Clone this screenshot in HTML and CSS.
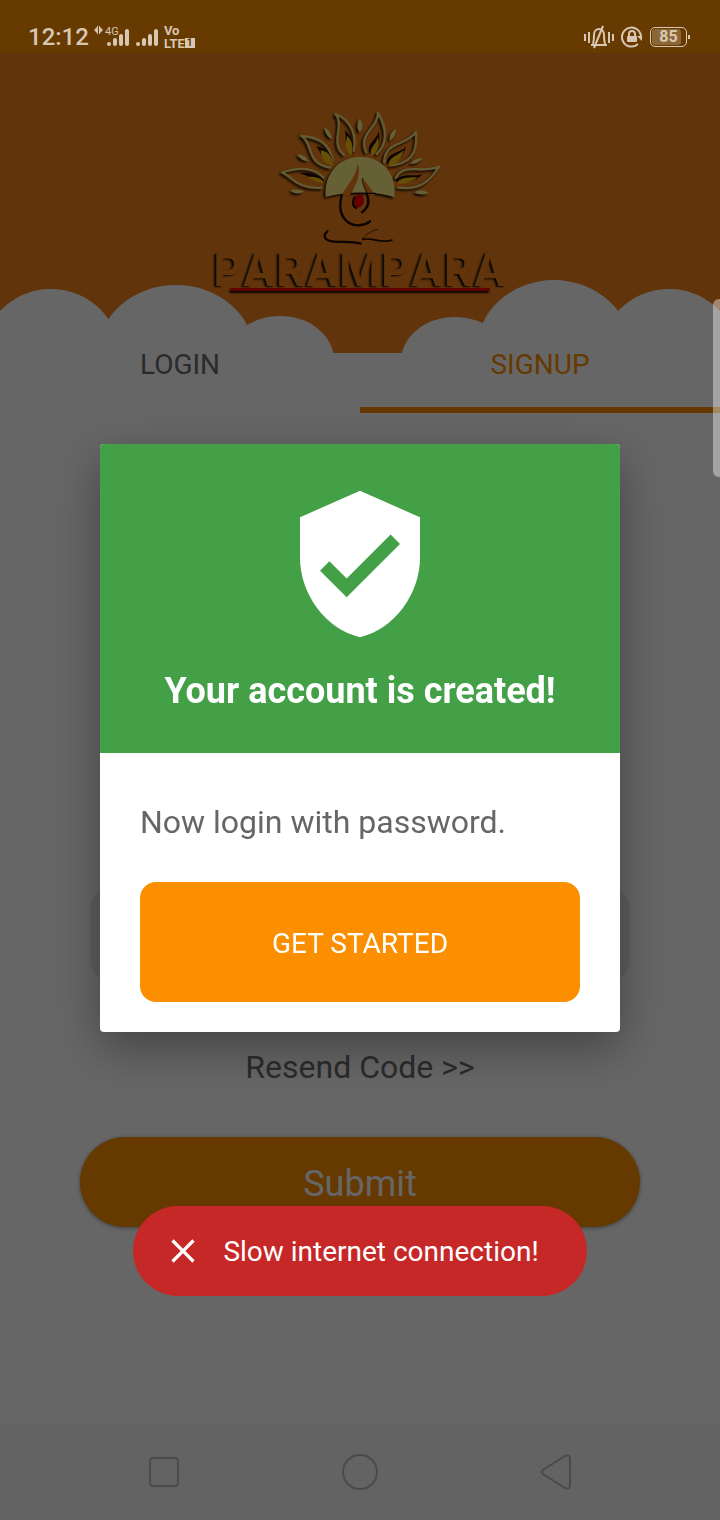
FILE: index.html
```html
<!DOCTYPE html>
<html lang="en">
<head>
<meta charset="utf-8">
<meta name="viewport" content="width=device-width, initial-scale=1">
<title>Parampara</title>
<link rel="stylesheet" href="styles.css">
</head>
<body>
<div class="app">
  <div class="status-bar">
    <div class="status-group">
      <span class="clock">12:12</span>
      <svg class="signal" viewBox="0 0 38 24" width="38" height="24" aria-hidden="true">
        <g fill="currentColor">
          <path d="M0 5l3-3v6zM3 1h1v8H3zM5 1h1v8H5zM9 5L6 2v6z"/>
          <circle cx="15" cy="19" r="2"/>
          <rect x="19" y="13" width="4" height="8" rx="2"/>
          <rect x="25" y="9" width="4" height="12" rx="2"/>
          <rect x="31" y="4" width="4" height="17" rx="2"/>
        </g>
        <text class="signal-text" x="11" y="10">4G</text>
      </svg>
      <svg class="signal" viewBox="0 0 24 24" width="24" height="24" aria-hidden="true">
        <g fill="currentColor">
          <circle cx="2" cy="19" r="2"/>
          <rect x="6" y="13" width="4" height="8" rx="2"/>
          <rect x="12" y="9" width="4" height="12" rx="2"/>
          <rect x="18" y="4" width="4" height="17" rx="2"/>
        </g>
      </svg>
      <span class="volte"><span>Vo</span><span class="lte">LTE<span class="sim">1</span></span></span>
    </div>
    <div class="status-group status-right">
      <svg viewBox="0 0 30 24" width="30" height="24" fill="none" stroke="currentColor" stroke-width="2" aria-hidden="true">
        <path d="M1 9v7M5 7v11M25 7v11M29 9v7M7 20h16M9 19c1-3 1-6 1-9 0-8 10-8 10 0 0 3 0 6 1 9M19 1L10 23"/>
      </svg>
      <svg viewBox="0 0 22 22" width="22" height="22" fill="none" stroke="currentColor" stroke-width="2" aria-hidden="true">
        <path d="M20 11a9.500 9.500 0 1 0-3 7"/>
        <path d="M21 15v-5l-5 0z" fill="currentColor" stroke="none"/>
        <path d="M8 10V8a3 3 0 0 1 6 0v2"/>
        <rect x="6" y="10" width="10" height="6" rx="1" fill="currentColor" stroke="none"/>
      </svg>
      <span class="battery"><span class="battery-level">85</span></span>
    </div>
  </div>

  <header class="hero">
    <svg class="clouds" viewBox="0 0 720 80" preserveAspectRatio="none" aria-hidden="true">
      <g fill="#fff">
        <ellipse cx="51" cy="86" rx="70" ry="70"/>
        <ellipse cx="176" cy="80" rx="78" ry="68"/>
        <ellipse cx="280" cy="87" rx="54" ry="44"/>
        <ellipse cx="455" cy="88" rx="54" ry="44"/>
        <ellipse cx="554" cy="79" rx="78" ry="72"/>
        <ellipse cx="669" cy="86" rx="70" ry="70"/>
      </g>
    </svg>
    <div class="brand">
      <svg class="emblem" viewBox="0 0 600 450" width="200" height="150" role="img" aria-label="Parampara emblem">
        <g class="relief" fill="none" stroke="#f5e27c" stroke-width="7" stroke-linejoin="round">
          <path d="M192 236C168 202 116 200 66 218C100 232 112 268 188 263"/>
          <path d="M218 186C212 132 178 112 124 108C162 130 136 194 214 203"/>
          <path d="M280 156C292 110 276 62 227 42C256 82 206 130 254 166"/>
          <path d="M320 160C290 100 354 88 354 38C388 98 376 138 348 164"/>
          <path d="M372 190C374 122 432 142 468 97C474 166 446 192 388 197"/>
          <path d="M406 236C430 186 484 222 537 200C508 248 474 272 412 262"/>
        </g>
        <g fill="#1c0c00">
          <path d="M192 240C170 220 144 216 118 220C144 226 160 244 190 247Z"/>
          <path d="M219 192C216 158 196 144 168 139C184 154 182 180 218 196Z"/>
          <path d="M275 164C284 132 276 108 254 91C262 118 250 140 270 166Z"/>
          <path d="M328 162C318 128 352 120 356 92C362 122 356 146 336 166Z"/>
          <path d="M380 192C380 156 420 160 438 140C430 170 414 190 386 196Z"/>
          <path d="M406 240C430 216 464 232 488 223C466 246 436 252 410 247Z"/>
        </g>
        <g fill="#ffc30c">
          <path d="M190 243C176 230 160 230 140 230C158 240 168 248 190 248Z"/>
          <path d="M220 194C214 164 202 154 182 151C184 176 192 190 219 198Z"/>
          <path d="M275 165C282 140 274 118 262 108C256 130 252 144 271 167Z"/>
          <path d="M332 165C328 142 350 132 354 110C360 136 352 156 337 167Z"/>
          <path d="M384 197C388 168 414 168 432 150C424 180 408 194 387 199Z"/>
          <path d="M412 246C430 228 454 234 474 231C454 248 432 254 412 250Z"/>
        </g>
        <g class="relief" fill="#fff08a">
          <path d="M90 272Q112 264 132 274Q112 288 90 272Z"/>
          <path d="M111 163Q138 164 146 184Q122 184 111 163Z"/>
          <path d="M193 82Q214 94 216 118Q196 110 193 82Z"/>
          <path d="M299 56Q316 78 299 98Q284 78 299 56Z"/>
          <path d="M408 86Q408 112 388 124Q386 98 408 86Z"/>
          <path d="M488 174Q472 194 450 192Q460 174 488 174Z"/>
          <path d="M462 277Q484 264 506 278Q484 290 462 277Z"/>
          <path d="M197 292C190 218 242 170 300 170C364 170 412 220 403 292C370 280 340 278 308 278C270 278 230 280 197 292Z"/>
        </g>
        <path fill="#f2821e" d="M244 292C258 254 288 236 293 190C304 222 290 250 272 284ZM346 290C336 262 314 250 309 230C304 250 310 264 322 286Z"/>
        <g class="soft" fill="none" stroke="#1c0c00" stroke-linecap="round">
          <path stroke-width="4" d="M274 280H346"/>
          <path stroke-width="7" d="M245 286C236 322 242 352 266 368C284 380 312 378 330 364"/>
          <path stroke-width="7" d="M320 282C330 304 324 324 306 337"/>
          <path stroke-width="7" d="M284 292C276 304 278 318 288 324"/>
          <path stroke-width="2" d="M306 236C308 254 316 266 322 278"/>
          <path stroke-width="7" d="M202 394C188 406 192 420 216 424C246 428 276 422 302 431"/>
          <path stroke-width="5" d="M308 418C338 412 366 432 396 420"/>
          <path stroke-width="2" d="M308 416C322 400 336 392 354 388"/>
        </g>
        <ellipse cx="297" cy="303" rx="14" ry="20" transform="rotate(12 297 303)" fill="#ff0000"/>
      </svg>
      <div class="wordmark">PARAMPARA</div>
      <div class="rule"></div>
    </div>
  </header>

  <nav class="tabs">
    <button class="tab" type="button">LOGIN</button>
    <button class="tab tab-active" type="button">SIGNUP</button>
  </nav>

  <main class="form">
    <input class="code-input" type="text" aria-label="Verification code">
    <a class="resend" href="#">Resend Code &gt;&gt;</a>
    <button class="submit" type="submit">Submit</button>
  </main>

  <div class="nav-bar">
    <button type="button" aria-label="Recent apps">
      <svg viewBox="0 0 40 40" width="40" height="40"><rect x="6" y="6" width="28" height="28" rx="3"/></svg>
    </button>
    <button type="button" aria-label="Home">
      <svg viewBox="0 0 40 40" width="40" height="40"><circle cx="20" cy="20" r="17"/></svg>
    </button>
    <button type="button" aria-label="Back">
      <svg viewBox="0 0 40 40" width="40" height="40"><path d="M7.500 17.500L29 4Q34 2 34 6.500V33Q34 38 29 36L7.500 22.500Q4 20 7.500 17.500Z"/></svg>
    </button>
  </div>
</div>

<div class="scrim">
  <section class="dialog" role="dialog" aria-modal="true" aria-labelledby="dialog-title">
    <div class="dialog-head">
      <svg viewBox="0 0 24 24" width="160" height="160" fill="#fff" aria-hidden="true">
        <path d="M12 1L3 5v6c0 5.550 3.840 10.740 9 12 5.160-1.260 9-6.450 9-12V5l-9-4zm-2 16l-4-4 1.410-1.410L10 14.170l6.590-6.590L18 9l-8 8z"/>
      </svg>
      <h1 id="dialog-title">Your account is created!</h1>
    </div>
    <div class="dialog-body">
      <p>Now login with password.</p>
      <button class="start" type="button">GET STARTED</button>
    </div>
  </section>
</div>

<div class="toast-layer">
  <div class="toast" role="alert">
    <svg viewBox="0 0 24 24" width="40" height="40" fill="#fff" aria-hidden="true">
      <path d="M19 6.410L17.590 5 12 10.590 6.410 5 5 6.410 10.590 12 5 17.590 6.410 19 12 13.410 17.590 19 19 17.590 13.410 12z"/>
    </svg>
    <span>Slow internet connection!</span>
  </div>
</div>
<div class="edge-handle"></div>
</body>
</html>
```

FILE: styles.css
```css
* {
  box-sizing: border-box;
}

body {
  margin: 0;
  font-family: Roboto, "Liberation Sans", sans-serif;
  background: #fff;
}

button {
  border: 0;
  padding: 0;
  background: none;
  font-family: inherit;
}

svg {
  display: block;
}

.app {
  display: flex;
  flex-direction: column;
  min-height: 100vh;
}

/* System bars sit above the scrim */
.status-bar {
  position: relative;
  z-index: 2;
  display: flex;
  justify-content: space-between;
  height: 53px;
  padding: 20px 33px 0 28px;
  background: #663a00;
  color: #d8c7b2;
}

.status-group {
  display: flex;
  align-items: center;
  height: 33px;
}

.clock {
  margin-right: 5px;
  font-size: 24px;
  font-weight: 500;
  line-height: 32px;
}

.signal {
  margin-right: 4px;
}

.signal-text {
  font-size: 11px;
  fill: currentColor;
}

.volte {
  display: flex;
  flex-direction: column;
  font-size: 13px;
  font-weight: 700;
  line-height: 13px;
}

.lte {
  display: flex;
  align-items: center;
}

.sim {
  padding: 0 2px;
  background: #d8c7b2;
  color: #663a00;
  font-size: 10px;
  line-height: 10px;
}

.status-right {
  gap: 7px;
}

.battery {
  position: relative;
  width: 37px;
  height: 20px;
  padding: 1px;
  border: 1px solid #d8c7b2;
  border-radius: 5px;
}

.battery::after {
  content: "";
  position: absolute;
  top: 7px;
  right: -4px;
  width: 2px;
  height: 4px;
  background: #d8c7b2;
}

.battery-level {
  display: block;
  width: 29px;
  padding-left: 4px;
  border-radius: 3px;
  background: #8b6738;
  font-size: 16px;
  font-weight: 700;
  line-height: 16px;
  text-align: center;
}

.hero {
  display: grid;
  height: 300px;
  background: #f2821e;
}

.clouds {
  grid-area: 1 / 1;
  align-self: end;
  width: 100%;
  height: 80px;
}

.brand {
  grid-area: 1 / 1;
  display: flex;
  flex-direction: column;
  align-items: center;
  padding-top: 47px;
}

.relief {
  filter: drop-shadow(-5px 5px 3px #140800);
}

.soft {
  filter: blur(2px);
}

.wordmark {
  color: #f2821e;
  font-family: Inter, "DejaVu Sans", sans-serif;
  font-size: 45px;
  font-kerning: none;
  font-weight: 700;
  line-height: 40px;
  text-shadow: -2px 1px 2px #140800;
}

.rule {
  width: 260px;
  height: 3px;
  margin-top: -2px;
  border-radius: 2px;
  background: #f00000;
  box-shadow: -1px 2px 2px #140800;
}

.tabs {
  display: flex;
}

.tab {
  flex: 1;
  height: 60px;
  padding-bottom: 30px;
  border-bottom: 6px solid transparent;
  color: #6b6b6b;
  font-size: 28px;
  line-height: 22px;
}

.tab-active {
  border-color: #fc8f00;
  color: #fc8f00;
}

.form {
  flex: 1;
  display: flex;
  flex-direction: column;
  justify-content: flex-end;
  align-items: center;
  padding: 0 80px 197px;
}

.code-input {
  width: calc(100% - 20px);
  height: 98px;
  border: 0;
  border-radius: 24px;
  background: #ebebeb;
}

.resend {
  margin: 65px 0 51px;
  color: #6b6b6b;
  font-size: 32px;
  line-height: 38px;
  text-decoration: none;
}

.submit {
  width: 100%;
  height: 90px;
  padding-top: 4px;
  border-radius: 45px;
  background: #fc8f00;
  box-shadow: 0 1px 4px rgba(0, 0, 0, 0.4);
  color: #fff;
  font-size: 36px;
}

.nav-bar {
  position: relative;
  z-index: 2;
  display: flex;
  justify-content: center;
  gap: 156px;
  height: 96px;
  background: #636363;
}

.nav-bar svg {
  fill: none;
  stroke: #4b4b4b;
  stroke-width: 2;
}

.scrim {
  position: fixed;
  inset: 0;
  z-index: 1;
  display: flex;
  align-items: center;
  justify-content: center;
  padding: 52px 100px 96px;
  background: rgba(0, 0, 0, 0.6);
}

.dialog {
  width: 100%;
  overflow: hidden;
  border-radius: 4px;
  background: #fff;
  box-shadow: 0 16px 48px rgba(0, 0, 0, 0.35);
}

.dialog-head {
  display: flex;
  flex-direction: column;
  align-items: center;
  padding: 40px 24px 41px;
  background: #43a047;
  color: #fff;
}

.dialog-head h1 {
  margin: 26px 0 0;
  font-size: 36px;
  font-weight: 700;
  line-height: 42px;
}

.dialog-body {
  padding: 50px 40px 30px;
}

.dialog-body p {
  margin: 0 0 41px;
  color: #666;
  font-size: 32px;
  line-height: 38px;
}

.start {
  display: block;
  width: 100%;
  height: 120px;
  padding-top: 2px;
  border-radius: 16px;
  background: #fc8f00;
  color: #fff;
  font-size: 28px;
}

.toast-layer {
  position: fixed;
  inset: auto 0 224px;
  z-index: 3;
  display: flex;
  justify-content: center;
}

.toast {
  display: flex;
  align-items: center;
  gap: 20px;
  height: 90px;
  padding: 0 48px 0 30px;
  border-radius: 45px;
  background: #c62828;
  color: #fff;
  font-size: 28px;
}

.edge-handle {
  position: fixed;
  top: 299px;
  right: 0;
  z-index: 4;
  width: 7px;
  height: 178px;
  border-radius: 6px 0 0 6px;
  background: rgba(255, 255, 255, 0.4);
}
```
